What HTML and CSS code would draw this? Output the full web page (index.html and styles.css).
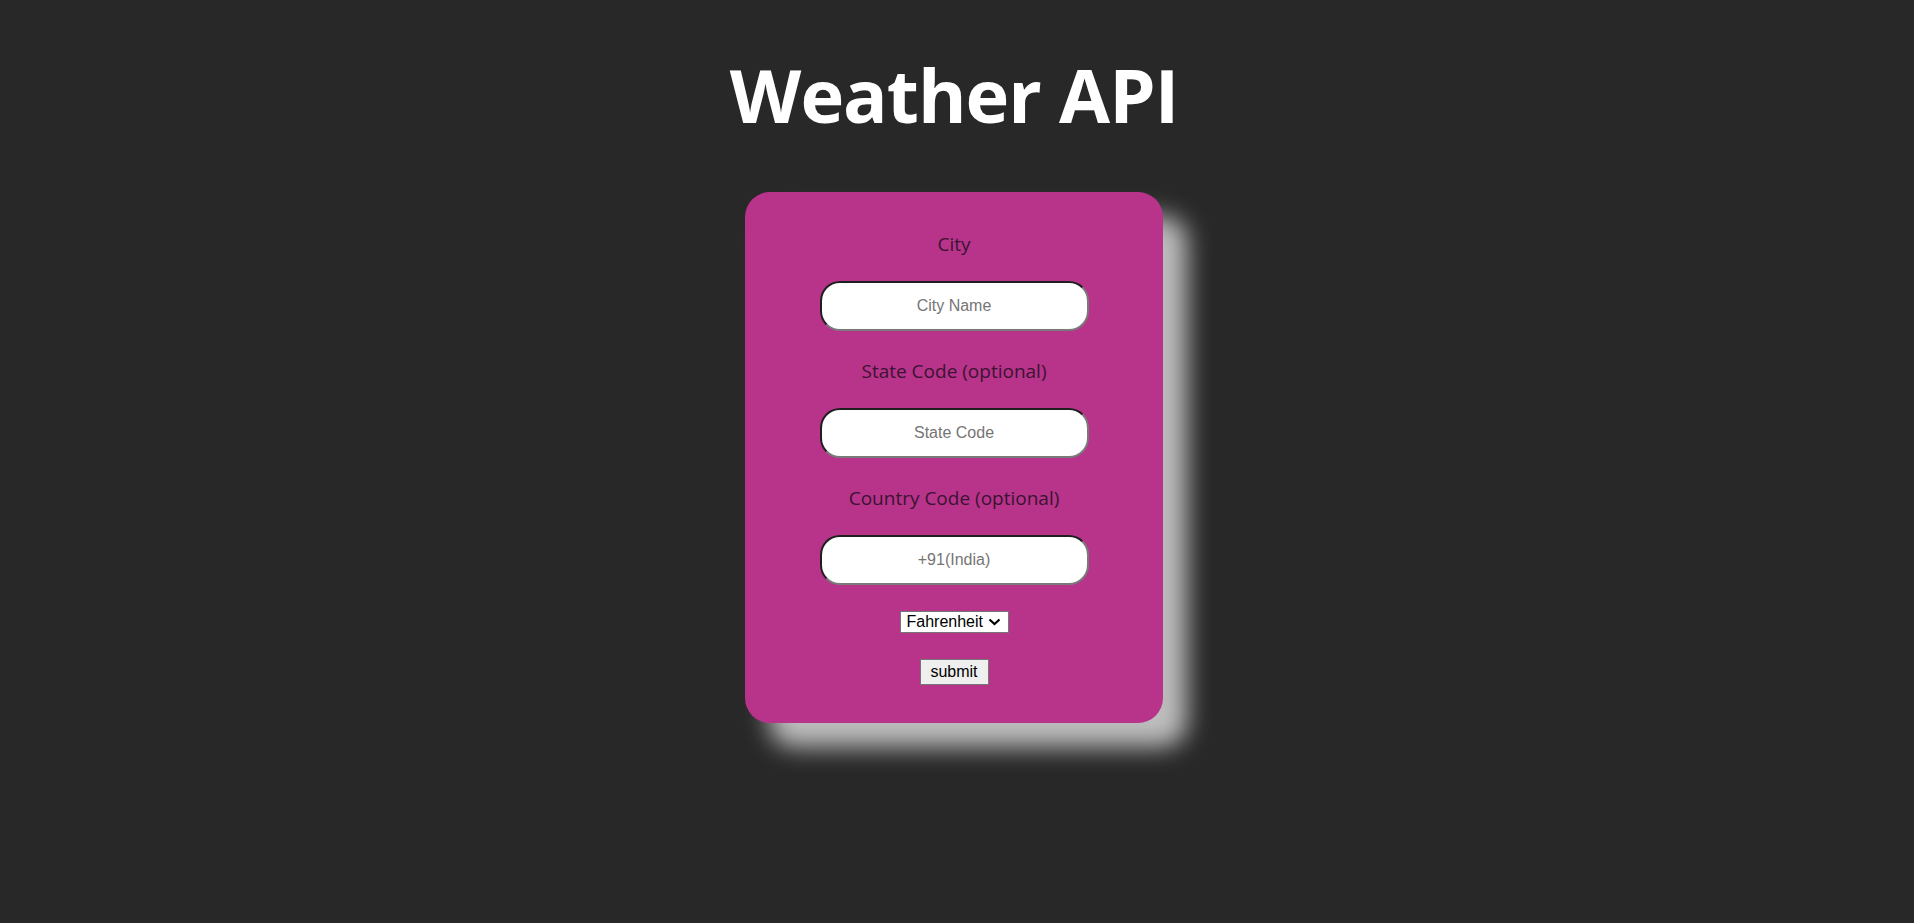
FILE: index.html
```
<!DOCTYPE html>
<html>
<head>
<meta charset="utf-8">
<title>Weather API</title>
<link rel="stylesheet" href="styles.css">
</head>
<body>
<h1 class="title">Weather API</h1>
<form class="card">
  <label class="label" for="city">City</label>
  <input class="field" id="city" type="text" placeholder="City Name">
  <label class="label" for="state">State Code (optional)</label>
  <input class="field" id="state" type="text" placeholder="State Code">
  <label class="label" for="country">Country Code (optional)</label>
  <input class="field" id="country" type="text" placeholder="+91(India)">
  <span class="select-wrap">
    <select class="units">
      <option>Fahrenheit</option>
      <option>Celsius</option>
    </select>
    <svg class="chevron" width="13" height="8" viewBox="0 0 13 8"><path d="M1.5 1.5 L6.5 6 L11.5 1.5" fill="none" stroke="#000" stroke-width="2.2"/></svg>
  </span>
  <button class="submit" type="button">submit</button>
</form>
</body>
</html>
```
FILE: styles.css
```
html, body {
  margin: 0;
  padding: 0;
  background: #282828;
}
body {
  min-height: 100vh;
  box-sizing: border-box;
  padding: 0 6px 60px 0;
  display: flex;
  flex-direction: column;
  align-items: center;
  font-family: "Open Sans", "Noto Sans", sans-serif;
}
.title {
  margin: 40px 0 0;
  height: 152px;
  font-size: 74px;
  line-height: 110px;
  font-weight: 700;
  color: #ffffff;
  letter-spacing: -1px;
}
.card {
  box-sizing: border-box;
  width: 418px;
  height: 531px;
  padding: 38px 0 0;
  background: #b8338a;
  border-radius: 25px;
  box-shadow: 24px 24px 25px #bebebe;
  display: flex;
  flex-direction: column;
  align-items: center;
}
.label {
  font-size: 19px;
  line-height: 28px;
  color: #3a1432;
  margin: 0 0 23px;
}
.field {
  box-sizing: border-box;
  width: 269px;
  height: 50px;
  margin: 0 0 26px;
  border: 2px solid;
  border-color: #1f1f1f #7a7a7a #7a7a7a #1f1f1f;
  border-radius: 20px;
  background: #ffffff;
  text-align: center;
  font-family: "Liberation Sans", Arial, sans-serif;
  font-size: 16px;
  outline: none;
}
.field::placeholder {
  color: #757575;
}
.select-wrap {
  position: relative;
  display: block;
  width: 109px;
  height: 22px;
  margin: 0 0 26px;
}
.units {
  box-sizing: border-box;
  display: block;
  height: 22px;
  width: 109px;
  margin: 0;
  -webkit-appearance: none;
  appearance: none;
  font-family: "Liberation Sans", Arial, sans-serif;
  font-size: 16px;
  line-height: 20px;
  color: #000;
  background: #fff;
  border: 1px solid #767676;
  border-radius: 0;
  padding: 0 0 0 6px;
}
.chevron {
  position: absolute;
  right: 8px;
  top: 7px;
  pointer-events: none;
}
.submit {
  box-sizing: border-box;
  height: 26px;
  width: 69px;
  padding: 0;
  font-family: "Liberation Sans", Arial, sans-serif;
  font-size: 16px;
  color: #000;
  background: #efefef;
  border: 1px solid #767676;
  border-radius: 0;
}
```
